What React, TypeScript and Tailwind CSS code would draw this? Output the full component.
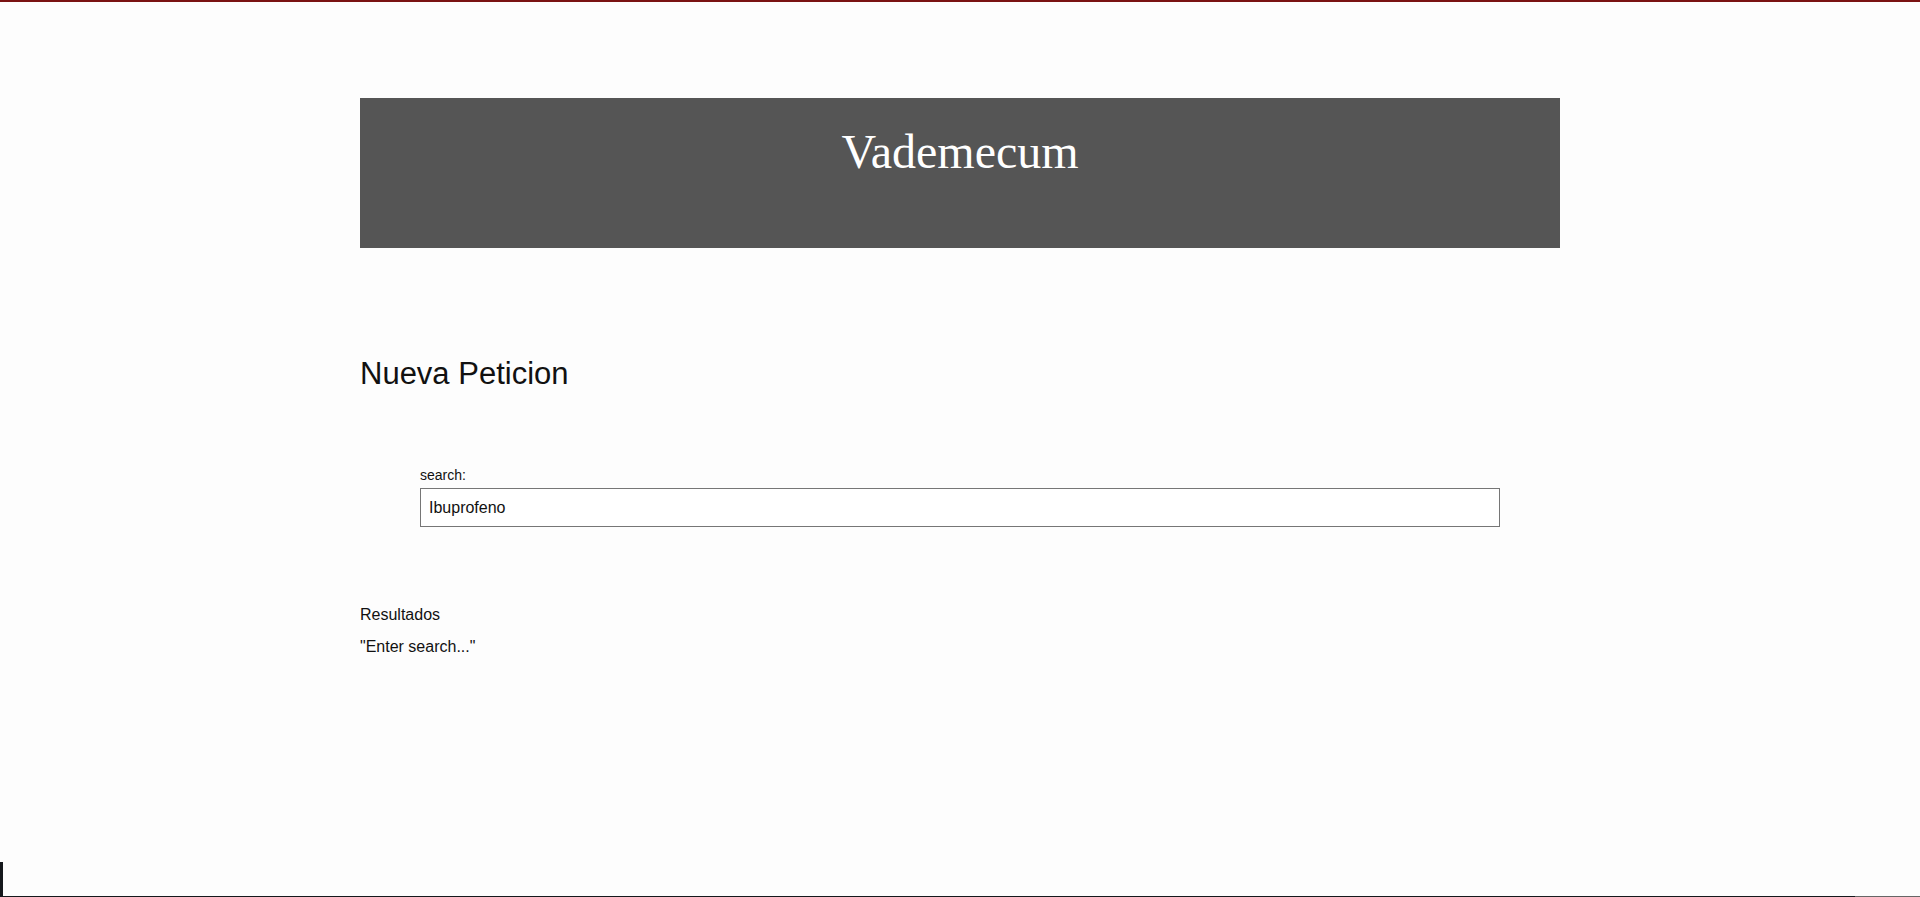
import React, { useState } from "react";

export default function App() {
  const [query, setQuery] = useState("Ibuprofeno");

  return (
    <div className="min-h-[897px] flex flex-col bg-[#fdfdfd] text-[#111] font-['Liberation_Sans',Arial,sans-serif]">
      <div className="h-[2px] bg-[#7a1212]" />

      <div className="w-[1200px] mx-auto mt-[96px]">
        <header className="h-[150px] bg-[#555555] pt-[27px] text-center">
          <h1 className="text-[48px] leading-[53px] text-white font-['Liberation_Serif','Times_New_Roman',serif]">
            Vademecum
          </h1>
        </header>

        <h2 className="mt-[108px] text-[31px] leading-[36px]">Nueva Peticion</h2>

        <div className="mt-[75px] px-[60px]">
          <label htmlFor="search" className="block text-[14px] leading-[16px] mb-[5px]">
            search:
          </label>
          <input
            id="search"
            value={query}
            onChange={(e) => setQuery(e.target.value)}
            className="block w-full h-[39px] border border-[#767676] bg-white px-[8px] text-[16px] text-[#111] outline-none"
          />
        </div>

        <div className="mt-[72px] text-[16px] leading-[32px]">
          <p>Resultados</p>
          <p>"Enter search..."</p>
        </div>
      </div>

      <div className="flex-1" />
      <div className="w-[3px] h-[34px] bg-[#15181c]" />
      <div className="flex h-[1px]">
        <div className="flex-1 bg-[#15181c]" />
        <div className="w-[65px] bg-[#666]" />
      </div>
    </div>
  );
}
